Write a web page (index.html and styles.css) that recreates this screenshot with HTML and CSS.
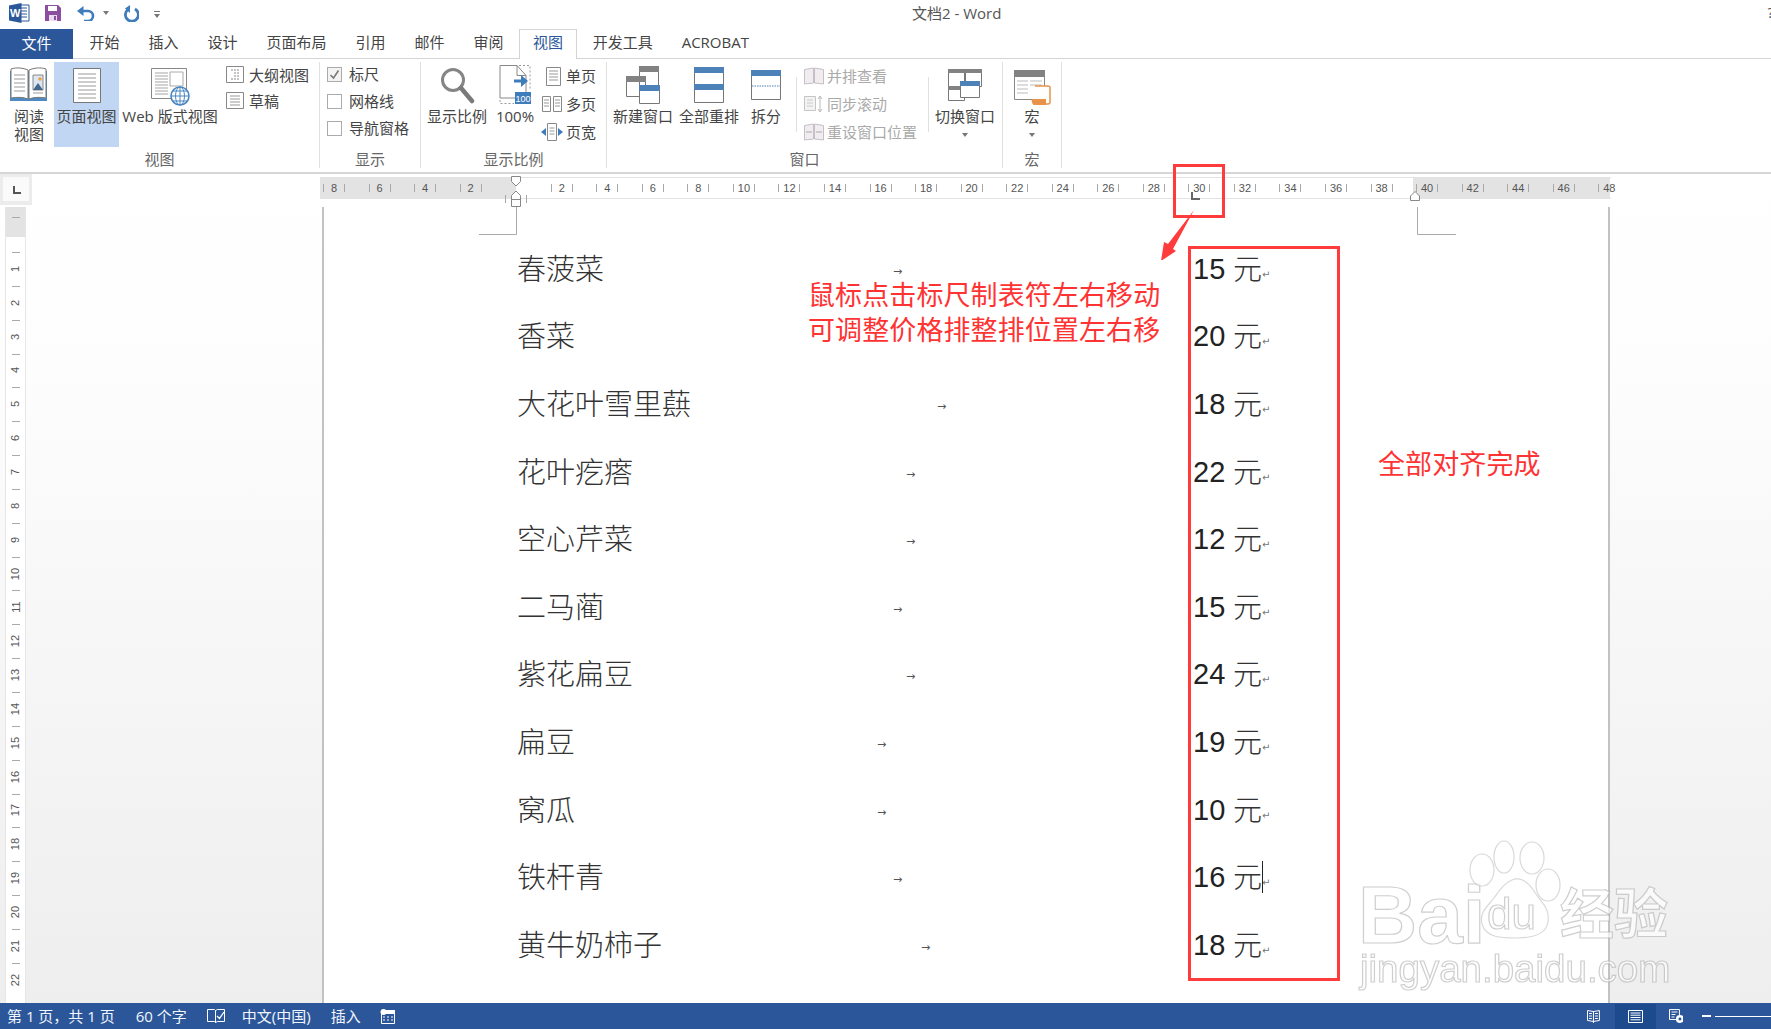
FILE: index.html
```html
<!DOCTYPE html>
<html lang="zh-CN">
<head>
<meta charset="utf-8">
<title>文档2 - Word</title>
<link rel="stylesheet" href="styles.css">
</head>
<body>
<header class="titlebar">
  <div class="qat">
    <svg class="q-word" width="21" height="20" viewBox="0 0 21 20"><path d="M11 2h9v16h-9z" fill="#fff" stroke="#2b579a"/><path d="M12 5h6M12 8h6M12 11h6M12 14h6" stroke="#2b579a"/><path d="M0 2.5 12.500 0v20L0 17.500z" fill="#2b579a"/><text x="6.200" y="14" text-anchor="middle" class="q-w">W</text></svg>
    <svg class="q-save" width="16" height="16" viewBox="0 0 16 16"><path d="M0 0h13l3 3v13H0z" fill="#8b4f9f"/><path d="M3 1h9v5H3z" fill="#fff"/><path d="M4 10h8v6H4z" fill="#e9dcef"/><path d="M9 11h2v4H9z" fill="#8b4f9f"/></svg>
    <svg class="q-undo" width="18" height="15" viewBox="0 0 18 15"><path d="M3 5h8a5 5 0 0 1 0 10H7" fill="none" stroke="#3f7cbc" stroke-width="2.600"/><path d="M6.500 0v10L0 5z" fill="#3f7cbc"/></svg>
    <i class="caret q-c1"></i>
    <svg class="q-redo" width="16" height="17" viewBox="0 0 16 17"><path d="M5 4.500A6.500 6.500 0 1 0 12 4" fill="none" stroke="#3f7cbc" stroke-width="2.800"/><path d="M9 0v8l5-4.500z" fill="#3f7cbc" transform="matrix(-1 0 0 1 16 0)"/></svg>
    <span class="q-more"><i class="q-bar"></i><i class="caret"></i></span>
  </div>
  <div class="doc-title">文档2 - Word</div>
  <div class="help">?</div>
</header>

<nav class="tabs">
  <a class="tab file">文件</a>
  <a class="tab">开始</a>
  <a class="tab">插入</a>
  <a class="tab">设计</a>
  <a class="tab">页面布局</a>
  <a class="tab">引用</a>
  <a class="tab">邮件</a>
  <a class="tab">审阅</a>
  <a class="tab active">视图</a>
  <a class="tab">开发工具</a>
  <a class="tab">ACROBAT</a>
</nav>

<section class="ribbon">
  <div class="group g1">
    <div class="g-body">
      <div class="big w46">
        <svg class="ic" width="46" height="46" viewBox="0 0 46 46"><path d="M4 9h37v30H4z" fill="#4d8ac4"/><path d="M5 7c6-2 12-1 17 1v29c-5-2-11-2-17-1z" fill="#fff" stroke="#777"/><path d="M23 8c5-2 11-3 17-1v29c-6-1-12-1-17 1z" fill="#fff" stroke="#777"/><path d="M8 13h11M8 17h11M8 21h11M8 25h11M8 29h11" stroke="#999"/><path d="M27 13h10v15H27z" fill="#dbe7f3" stroke="#888"/><path d="M27 28l5-7 5 7z" fill="#44688c"/><circle cx="34" cy="17" r="1.800" fill="#eda33d"/><path d="M27 31h10" stroke="#999"/></svg>
        <span>阅读</span><span>视图</span>
      </div>
      <div class="big w65 selected">
        <svg class="ic" width="30" height="46" viewBox="0 0 30 46"><path d="M1.500 6.500h27v34h-27z" fill="#fff" stroke="#777"/><path d="M6 12h18M6 16h18M6 20h18M6 24h18M6 28h18M6 32h18M6 36h18" stroke="#9a9a9a"/></svg>
        <span>页面视图</span>
      </div>
      <div class="big w98">
        <svg class="ic" width="40" height="46" viewBox="0 0 40 46"><path d="M1.500 6.500h35v30h-35z" fill="#fff" stroke="#888"/><path d="M5 11h13M5 14h13M5 17h13M5 20h13M5 23h13M5 26h13M5 29h13M5 32h13" stroke="#a5a5a5"/><path d="M20 10h13v14H20z" fill="none" stroke="#aaa"/><circle cx="30" cy="34" r="9" fill="#fff" stroke="#4b87c0" stroke-width="1.600"/><path d="M21 34h18M30 25v18M23 29h14M23 39h14" stroke="#4b87c0"/><ellipse cx="30" cy="34" rx="4.500" ry="9" fill="none" stroke="#4b87c0"/></svg>
        <span>Web 版式视图</span>
      </div>
      <div class="small-col c-view">
        <div class="srow"><svg width="18" height="18" viewBox="0 0 18 18"><path d="M.5.500h17v16H.5z" fill="#fff" stroke="#888"/><path d="M5 4h9M8 7h6M8 10h6M5 13h9" stroke="#888" stroke-dasharray="2 1"/></svg><span>大纲视图</span></div>
        <div class="srow"><svg width="18" height="18" viewBox="0 0 18 18"><path d="M.5.500h17v16H.5z" fill="#fff" stroke="#888"/><path d="M4 4h10M4 7h10M4 10h10M4 13h10" stroke="#999"/></svg><span>草稿</span></div>
      </div>
    </div>
    <div class="g-label">视图</div>
  </div>

  <div class="group g2">
    <div class="g-body checks">
      <div class="crow"><i class="cbox on"><svg width="13" height="13" viewBox="0 0 13 13"><path d="M2.500 7l3 3 5-7.500" fill="none" stroke="#777" stroke-width="1.500"/></svg></i><span>标尺</span></div>
      <div class="crow"><i class="cbox"></i><span>网格线</span></div>
      <div class="crow"><i class="cbox"></i><span>导航窗格</span></div>
    </div>
    <div class="g-label">显示</div>
  </div>

  <div class="group g3">
    <div class="g-body">
      <div class="big w60 ml6">
        <svg class="ic" width="36" height="46" viewBox="0 0 36 46"><circle cx="14" cy="18" r="10.500" fill="#fff" stroke="#858585" stroke-width="3"/><path d="M22 26l11 13" stroke="#7a7a7a" stroke-width="4.500" stroke-linecap="round"/></svg>
        <span>显示比例</span>
      </div>
      <div class="big w40 ml8">
        <svg class="ic" width="36" height="46" viewBox="0 0 36 46"><path d="M3 3.500h17l9 10V36H3z" fill="#fff" stroke="#888"/><path d="M20 3.500v10h9" fill="none" stroke="#888"/><path d="M22 3.500h11V28M3 38v3.500h14" fill="none" stroke="#999" stroke-dasharray="2 2"/><path d="M17 19h11" stroke="#3f7cbc" stroke-width="3"/><path d="M24 13l7 6-7 6z" fill="#3f7cbc"/><path d="M18 30h16v12H18z" fill="#3f7cbc"/><text x="26" y="40" text-anchor="middle" class="badge">100</text></svg>
        <span>100%</span>
      </div>
      <div class="small-col c-zoom">
        <div class="srow"><svg width="22" height="20" viewBox="0 0 22 20"><path d="M5.500 1.500h14v18h-14z" fill="#fff" stroke="#888"/><path d="M8 5h9M8 8h9M8 11h9M8 14h9" stroke="#999"/></svg><span>单页</span></div>
        <div class="srow"><svg width="22" height="20" viewBox="0 0 22 20"><path d="M1.500 2.500h8v15h-8zM12.500 2.500h8v15h-8z" fill="#fff" stroke="#888"/><path d="M3 6h5M3 9h5M3 12h5M14 6h5M14 9h5M14 12h5" stroke="#999"/></svg><span>多页</span></div>
        <div class="srow"><svg width="22" height="20" viewBox="0 0 22 20"><path d="M6.500 1.500h9v17h-9z" fill="#fff" stroke="#888"/><path d="M8.500 6h5M8.500 9h5M8.500 12h5" stroke="#999"/><path d="M0 10l5-4v8zM22 10l-5-4v8z" fill="#3f7cbc"/></svg><span>页宽</span></div>
      </div>
    </div>
    <div class="g-label">显示比例</div>
  </div>

  <div class="group g4">
    <div class="g-body">
      <div class="big w60 ml6">
        <svg class="ic" width="36" height="46" viewBox="0 0 36 46"><path d="M14.500 4.500h19v20h-19zM1.500 14.500h19v20h-19z" fill="#fff" stroke="#777"/><path d="M14 4h20v6H14zM1 14h20v6H1z" fill="#828282"/><path d="M14.500 23.500h20v18h-20z" fill="#fff" stroke="#777"/><path d="M14 23h21v6H14z" fill="#4d82b8"/></svg>
        <span>新建窗口</span>
      </div>
      <div class="big w60 ml6">
        <svg class="ic" width="32" height="46" viewBox="0 0 32 46"><path d="M1.500 5.500h29v35h-29z" fill="#fff" stroke="#777"/><path d="M1 5h30v6H1zM1 22h30v6H1z" fill="#4d82b8"/></svg>
        <span>全部重排</span>
      </div>
      <div class="big w40 ml7">
        <svg class="ic" width="32" height="46" viewBox="0 0 32 46"><path d="M1.500 8.500h29v29h-29z" fill="#fff" stroke="#777"/><path d="M1 8h30v6H1z" fill="#4d82b8"/><path d="M2 24h28" stroke="#4d82b8" stroke-dasharray="1.500 1"/></svg>
        <span>拆分</span>
      </div>
      <i class="vsep ms1"></i>
      <div class="small-col c-win">
        <div class="srow"><svg width="20" height="18" viewBox="0 0 20 18"><path d="M.5 2.500l9-1.500v15l-9 1zM19.500 2.500l-9-1.500v15l9 1z" fill="#f0ecf0" stroke="#c5c0c5"/></svg><span>并排查看</span></div>
        <div class="srow"><svg width="20" height="18" viewBox="0 0 20 18"><path d="M.5 1.500h11v14H.5z" fill="#f3f3f3" stroke="#c5c5c5"/><path d="M3 5h6M3 8h6M3 11h6" stroke="#ccc"/><path d="M16 1v16M14 4l2-3 2 3M14 14l2 3 2-3" fill="none" stroke="#bbb"/></svg><span>同步滚动</span></div>
        <div class="srow"><svg width="20" height="18" viewBox="0 0 20 18"><path d="M.5 2.500l9-1.500v15l-9 1zM19.500 2.500l-9-1.500v15l9 1z" fill="#f0ecf0" stroke="#c5c0c5"/><path d="M2 9h6M18 9h-6" stroke="#aaa"/></svg><span>重设窗口位置</span></div>
      </div>
      <i class="vsep ms2"></i>
      <div class="big w60 ml6">
        <svg class="ic" width="36" height="46" viewBox="0 0 36 46"><path d="M1.500 7.500h16v17h-16zM18.500 7.500h16v17h-16zM1.500 24.500h16v14h-16z" fill="#fff" stroke="#777"/><path d="M1 7h17v4H1zM18 7h17v4H18zM1 24h17v4H1z" fill="#828282"/><path d="M13.500 19.500h19v16h-19z" fill="#fff" stroke="#777"/><path d="M13 19h20v5H13z" fill="#4d82b8"/></svg>
        <span>切换窗口</span>
        <i class="caret down"></i>
      </div>
    </div>
    <div class="g-label">窗口</div>
  </div>

  <div class="group g5">
    <div class="g-body">
      <div class="big w58">
        <svg class="ic" width="38" height="46" viewBox="0 0 38 46"><path d="M1.500 8.500h30v29h-30z" fill="#fff" stroke="#888"/><path d="M1 8h31v7H1z" fill="#828282"/><path d="M4 19h11M17 19h12M4 23h11M17 23h12M4 27h11M4 31h11" stroke="#bbb"/><path d="M22 24h13c2 0 2 2 2 2v14c0 2-2 2-2 2H22" fill="#fff" stroke="#e8924a" stroke-width="1.500"/><path d="M19 37h14v6H21c-2 0-3-6-2-6z" fill="#e8924a"/></svg>
        <span>宏</span>
        <i class="caret down"></i>
      </div>
    </div>
    <div class="g-label">宏</div>
  </div>
</section>

<main class="workspace">
  <div class="ruler-row">
    <div class="tab-corner"><i class="l-mark"></i></div>
    <div class="h-ruler">
      <span class="rc"><b>8</b></span><span class="rc"><b>6</b></span><span class="rc"><b>4</b></span><span class="rc"><b>2</b></span><span class="rc"><b></b></span><span class="rc"><b>2</b></span><span class="rc"><b>4</b></span><span class="rc"><b>6</b></span><span class="rc"><b>8</b></span><span class="rc"><b>10</b></span><span class="rc"><b>12</b></span><span class="rc"><b>14</b></span><span class="rc"><b>16</b></span><span class="rc"><b>18</b></span><span class="rc"><b>20</b></span><span class="rc"><b>22</b></span><span class="rc"><b>24</b></span><span class="rc"><b>26</b></span><span class="rc"><b>28</b></span><span class="rc"><b>30</b></span><span class="rc"><b>32</b></span><span class="rc"><b>34</b></span><span class="rc"><b>36</b></span><span class="rc"><b>38</b></span><span class="rc"><b>40</b></span><span class="rc"><b>42</b></span><span class="rc"><b>44</b></span><span class="rc"><b>46</b></span><span class="rc"><b>48</b></span>
    </div>
  </div>
  <div class="doc-row">
    <div class="v-ruler">
      <div class="v-top"></div>
      <span class="vc"><b>1</b></span><span class="vc"><b>2</b></span><span class="vc"><b>3</b></span><span class="vc"><b>4</b></span><span class="vc"><b>5</b></span><span class="vc"><b>6</b></span><span class="vc"><b>7</b></span><span class="vc"><b>8</b></span><span class="vc"><b>9</b></span><span class="vc"><b>10</b></span><span class="vc"><b>11</b></span><span class="vc"><b>12</b></span><span class="vc"><b>13</b></span><span class="vc"><b>14</b></span><span class="vc"><b>15</b></span><span class="vc"><b>16</b></span><span class="vc"><b>17</b></span><span class="vc"><b>18</b></span><span class="vc"><b>19</b></span><span class="vc"><b>20</b></span><span class="vc"><b>21</b></span><span class="vc"><b>22</b></span>
    </div>
    <article class="page">
      <div class="line"><div class="item"><span class="name">春菠菜</span><i class="tabchar t3">→</i></div><div class="price"><span class="num">15</span> <span class="yuan">元</span><i class="pm">↵</i></div></div>
      <div class="line"><div class="item"><span class="name">香菜</span></div><div class="price"><span class="num">20</span> <span class="yuan">元</span><i class="pm">↵</i></div></div>
      <div class="line"><div class="item"><span class="name">大花叶雪里蕻</span><i class="tabchar t6">→</i></div><div class="price"><span class="num">18</span> <span class="yuan">元</span><i class="pm">↵</i></div></div>
      <div class="line"><div class="item"><span class="name">花叶疙瘩</span><i class="tabchar t4">→</i></div><div class="price"><span class="num">22</span> <span class="yuan">元</span><i class="pm">↵</i></div></div>
      <div class="line"><div class="item"><span class="name">空心芹菜</span><i class="tabchar t4">→</i></div><div class="price"><span class="num">12</span> <span class="yuan">元</span><i class="pm">↵</i></div></div>
      <div class="line"><div class="item"><span class="name">二马蔺</span><i class="tabchar t3">→</i></div><div class="price"><span class="num">15</span> <span class="yuan">元</span><i class="pm">↵</i></div></div>
      <div class="line"><div class="item"><span class="name">紫花扁豆</span><i class="tabchar t4">→</i></div><div class="price"><span class="num">24</span> <span class="yuan">元</span><i class="pm">↵</i></div></div>
      <div class="line"><div class="item"><span class="name">扁豆</span><i class="tabchar t2">→</i></div><div class="price"><span class="num">19</span> <span class="yuan">元</span><i class="pm">↵</i></div></div>
      <div class="line"><div class="item"><span class="name">窝瓜</span><i class="tabchar t2">→</i></div><div class="price"><span class="num">10</span> <span class="yuan">元</span><i class="pm">↵</i></div></div>
      <div class="line"><div class="item"><span class="name">铁杆青</span><i class="tabchar t3">→</i></div><div class="price"><span class="num">16</span> <span class="yuan">元</span><i class="cursor"></i><i class="pm">↵</i></div></div>
      <div class="line"><div class="item"><span class="name">黄牛奶柿子</span><i class="tabchar t5">→</i></div><div class="price"><span class="num">18</span> <span class="yuan">元</span><i class="pm">↵</i></div></div>
    </article>
  </div>
</main>

<footer class="status">
  <span class="st s1">第 1 页，共 1 页</span>
  <span class="st s2">60 个字</span>
  <svg class="s3" width="18" height="14" viewBox="0 0 18 14"><path d="M.5.500h7l1 1v12l-1-1h-7zM17.500.500h-7l-2 1v12l2-1h7z" fill="none" stroke="#fff"/><path d="M10 7l2.500 2.500L17 3" fill="none" stroke="#fff" stroke-width="1.300"/></svg>
  <span class="st s4">中文(中国)</span>
  <span class="st s5">插入</span>
  <svg class="s6" width="15" height="15" viewBox="0 0 15 15"><path d="M1.500 2.500h13v12h-13z" fill="none" stroke="#fff"/><path d="M1 1h14v4H1z" fill="#fff"/><circle cx="3.500" cy="3" r="3" fill="#fff"/><path d="M3 8h2M7 8h2M11 8h2M3 11h2M7 11h2M11 11h2" stroke="#fff"/></svg>
  <span class="st-right">
    <svg width="14" height="14" viewBox="0 0 14 14"><path d="M.5 1.500l6 1 6-1v10l-6 1-6-1z" fill="none" stroke="#fff"/><path d="M6.500 2v12M2 4.500h3M2 7h3M2 9.500h3M8 4.500h3M8 7h3M8 9.500h3" stroke="#fff"/></svg>
    <span class="view-on"><svg width="15" height="13" viewBox="0 0 15 13"><path d="M.5.500h14v12H.5z" fill="none" stroke="#fff"/><path d="M2.500 3h10M2.500 5.200h10M2.500 7.500h10M2.500 9.800h10" stroke="#fff"/></svg></span>
    <svg class="s-web" width="15" height="14" viewBox="0 0 15 14"><path d="M.5.500h10v10H.5z" fill="none" stroke="#fff"/><path d="M2.500 3h6M2.500 5.500h4M2.500 8h3" stroke="#fff"/><circle cx="11" cy="10" r="4" fill="#fff"/><circle cx="11" cy="10" r="1.500" fill="#2b579a"/></svg>
    <i class="z-minus"></i><i class="z-line"></i>
  </span>
</footer>

<!-- overlays -->
<svg class="markers" width="1771" height="260" viewBox="0 0 1771 260">
  <path d="M511.500 176.500h9v5l-4.500 4.500-4.500-4.500z" fill="#fff" stroke="#888"/>
  <path d="M516 191l4.500 4.500v11h-9v-11z" fill="#fff" stroke="#888"/>
  <path d="M511.500 199.500h9" stroke="#888"/>
  <path d="M1415 191.500l4.500 4.500v4.500h-9V196z" fill="#fff" stroke="#888"/>
  <path d="M516.500 207v27.500H479M1417.500 207v27.500H1456" fill="none" stroke="#aaa"/>
  <path d="M1192 192v7h8" fill="none" stroke="#666" stroke-width="2"/>
  <path d="M1174.500 165.500h49v51h-49z" fill="none" stroke="#ff3b3b" stroke-width="3"/>
  <path d="M1194 210 1173 249l3 2-15 10 3-19 4 2z" fill="#ff3b3b"/>
</svg>
<div class="big-box"></div>
<div class="note note-a">鼠标点击标尺制表符左右移动<br>可调整价格排整排位置左右移</div>
<div class="note note-b">全部对齐完成</div>

<div class="wm">
  <span class="wm-bai">Bai</span>
  <svg class="wm-paw" width="100" height="105" viewBox="0 0 100 105"><g fill="#fff" fill-opacity=".7" stroke="#aaa" stroke-opacity=".45" stroke-width="1.200"><ellipse cx="14" cy="30" rx="12" ry="16"/><ellipse cx="36" cy="17" rx="10" ry="16"/><ellipse cx="64" cy="18" rx="12" ry="16"/><ellipse cx="80" cy="45" rx="12" ry="16"/><path d="M44 40c10-4 18 4 24 14 5 8 14 14 12 28-2 14-18 16-32 16-14 0-30 0-34-14-3-12 6-18 12-26 5-7 10-15 18-18z"/></g></svg>
  <span class="wm-du">du</span>
  <span class="wm-cn">经验</span>
  <span class="wm-url">jingyan.baidu.com</span>
</div>
</body>
</html>
```
FILE: styles.css
```css
* { box-sizing: border-box; }
html, body { margin: 0; padding: 0; }
body {
  position: relative;
  width: 1771px;
  height: 1029px;
  overflow: hidden;
  display: flex;
  flex-direction: column;
  background: #fff;
  color: #444;
  font-family: "Open Sans", "Noto Sans CJK SC", sans-serif;
  font-size: 15px;
}
i { font-style: normal; }

/* title bar */
.titlebar { height: 29px; flex: none; display: flex; align-items: center; overflow: hidden; }
.qat { width: 912px; flex: none; display: flex; align-items: center; padding-left: 9px; }
.q-word { margin-top: -3px; }
.q-w { font: bold 11px "Liberation Sans", sans-serif; fill: #fff; }
.q-save { margin-left: 15px; margin-top: -3px; }
.q-undo { margin-left: 16px; margin-top: -3px; }
.q-c1 { margin-left: 8px; margin-top: -3px; }
.q-redo { margin-left: 14px; margin-top: -3px; }
.q-more { margin-left: 15px; display: flex; flex-direction: column; align-items: center; gap: 2px; }
.q-bar { width: 6px; height: 1px; background: #777; }
.caret { display: block; width: 0; height: 0; border: 3.500px solid transparent; border-top: 4px solid #777; border-bottom: 0; }
.doc-title { color: #555; font-size: 15px; line-height: 20px; margin-top: -4px; }
.help { margin-left: auto; margin-right: -3px; margin-top: -6px; color: #555; font-size: 15px; }

/* tabs */
.tabs { height: 30px; flex: none; display: flex; border-bottom: 1px solid #d4d4d4; }
.tab { padding: 0 14.500px; line-height: 27px; height: 29px; color: #444; white-space: nowrap; font-size: 15px; }
.tab.file { width: 73px; padding: 0; text-align: center; color: #fff; background: #2b579a; margin-right: 2px; height: 30px; line-height: 28px; }
.tab.active { height: 30px; padding: 0 13px; margin: 0 1px; border: 1px solid #d4d4d4; border-bottom: 0; background: #fff; color: #2b579a; line-height: 25px; }

/* ribbon */
.ribbon { height: 115px; flex: none; display: flex; padding-top: 3px; border-bottom: 2px solid #d6d6d6; align-items: flex-start; }
.group { height: 106px; flex: none; border-right: 1px solid #e0e0e0; display: flex; flex-direction: column; }
.g1 { width: 320px; }
.g2 { width: 101px; }
.g3 { width: 186px; }
.g4 { width: 396px; }
.g5 { width: 59px; }
.g-body { height: 87px; display: flex; align-items: flex-start; flex: none; }
.g-label { text-align: center; line-height: 20px; height: 18px; color: #666; font-size: 15px; }
.g1 .g-body { padding-left: 6px; }

.big { display: flex; flex-direction: column; align-items: center; height: 85px; flex: none; line-height: 18px; white-space: nowrap; font-size: 15px; }
.big .ic { display: block; flex: none; margin-bottom: -1px; }
.big .caret.down { margin-top: 8px; }
.w46 { width: 46px; }
.w65 { width: 65px; margin-left: 2px; }
.w98 { width: 98px; margin-left: 2px; }
.w60 { width: 60px; }
.w40 { width: 40px; }
.w58 { width: 58px; }
.ml6 { margin-left: 6px; }
.ml7 { margin-left: 7px; }
.ml8 { margin-left: 8px; }
.selected { background: #c1d6f2; }

.small-col { display: flex; flex-direction: column; flex: none; padding-top: 3px; }
.srow { display: flex; align-items: center; height: 20px; white-space: nowrap; line-height: 20px; font-size: 15px; }
.c-view { margin-left: 7px; gap: 6px; }
.c-view .srow svg { margin-right: 5px; }
.c-zoom { padding-top: 4px; gap: 8px; margin-left: 6px; }
.c-zoom .srow svg { margin-right: 3px; }
.c-win { margin-left: 7px; padding-top: 4px; gap: 8px; color: #aaa; }
.c-win .srow svg { margin-right: 3px; }
.vsep { display: block; width: 1px; height: 55px; margin-top: 15px; background: #e0e0e0; flex: none; }
.ms1 { margin-left: 10px; }
.ms2 { margin-left: 11px; }

.checks { flex-direction: column; padding: 2px 0 0 7px; gap: 7px; }
.crow { display: flex; align-items: center; height: 20px; line-height: 20px; white-space: nowrap; font-size: 15px; }
.cbox { width: 15px; height: 15px; border: 1px solid #ababab; margin-right: 7px; flex: none; background: #fff; display: flex; }
.cbox.on { background: #f3f3f3; }

.badge { font: 9px "Liberation Sans", sans-serif; fill: #fff; }

/* workspace */
.workspace { flex: 1; min-height: 0; display: flex; flex-direction: column; background: linear-gradient(#fff 0, #fdfdfd 200px, #eeeeee 100%); overflow: hidden; }
.ruler-row { height: 33px; flex: none; position: relative; padding: 3px 0 0 320px; }
.tab-corner { position: absolute; left: 0; top: 0; width: 32px; height: 31px; background: #ececec; padding: 3px; }
.tab-corner::before { content: ""; display: block; width: 26px; height: 24px; background: #fafafa; }
.l-mark { position: absolute; left: 13px; top: 12px; width: 8px; height: 8px; border-left: 2px solid #555; border-bottom: 2px solid #555; }
.h-ruler { width: 1295px; height: 22px; display: flex; background: linear-gradient(to right, #e3e3e3 196px, #fff 196px, #fff 1093px, #e3e3e3 1093px, #e3e3e3 1290px, #fff 1290px); border-top: 1px solid #e3e3e3; border-bottom: 1px solid #e3e3e3; border-image: linear-gradient(to right, #e3e3e3 1290px, #fff 1290px) 1; }
.rc { flex: none; width: 45.550px; height: 20px; display: flex; justify-content: center; align-items: center; }
.rc:first-child { margin-left: -8.800px; }
.rc b { position: relative; width: 22px; text-align: center; font: 400 11px/22px "Liberation Sans", sans-serif; color: #555; }
.rc b::before, .rc b::after { content: ""; position: absolute; top: 7px; width: 1px; height: 8px; background: #a8a8a8; }
.rc b::before { left: 0; }
.rc b::after { right: 0; }
.rc:last-child b::after { display: none; }

.doc-row { flex: 1; min-height: 0; display: flex; }
.v-ruler { width: 21px; margin-left: 5px; flex: none; background: #fff; border: 1px solid #e6e6e6; border-width: 0 1px; display: flex; flex-direction: column; overflow: hidden; }
.v-top { height: 45px; flex: none; background: linear-gradient(#e3e3e3 30px, #fff 30px); position: relative; }
.v-top::before { content: ""; position: absolute; left: 6px; top: 10px; width: 8px; height: 1px; background: #aaa; }
.vc { height: 33.850px; flex: none; position: relative; display: flex; align-items: center; justify-content: center; }
.vc::before { content: ""; position: absolute; left: 6px; top: 0; width: 8px; height: 1px; background: #aaa; }
.vc b { display: block; transform: rotate(-90deg); font: 400 11px/14px "Liberation Sans", sans-serif; color: #555; white-space: nowrap; }

.page { width: 1288px; margin-left: 296px; flex: none; background: #fff; border: 2px solid #c2c2c2; border-width: 0 2px; padding: 28px 0 0 193px; }
.line { height: 67.600px; display: grid; grid-template-columns: 676px auto; align-items: center; }
.item { display: flex; align-items: center; }
.name { font-size: 29px; line-height: 40px; color: #333; font-weight: 300; white-space: nowrap; }
.tabchar { font: 11px/12px "DejaVu Sans", sans-serif; color: #555; display: block; width: 10px; overflow: hidden; margin-top: 6px; }
.t2 { margin-left: 302px; }
.t3 { margin-left: 289px; }
.t4 { margin-left: 273px; }
.t5 { margin-left: 259px; }
.t6 { margin-left: 246px; }
.price { display: flex; align-items: center; position: relative; color: #222; }
.num { font: 29px/40px "Liberation Sans", sans-serif; width: 32px; }
.yuan { font-size: 29px; line-height: 40px; font-weight: 300; margin-left: 8px; color: #333; }
.pm { font: 10px/10px "DejaVu Sans", sans-serif; color: #777; margin-top: 12px; }
.cursor { position: absolute; left: 69px; top: 4px; width: 1px; height: 32px; background: #222; }

/* status */
.status { height: 26px; flex: none; background: #2b579a; color: #f2f5fa; display: flex; align-items: center; font-size: 15px; }
.st { white-space: nowrap; line-height: 20px; margin-top: -1px; }
.s1 { margin-left: 7px; }
.s2 { margin-left: 21px; }
.s3 { margin-left: 20px; }
.s4 { margin-left: 17px; }
.s5 { margin-left: 20px; }
.s6 { margin-left: 19px; }
.st-right { margin-left: auto; height: 100%; display: flex; align-items: center; width: 184px; }
.view-on { width: 41px; height: 25px; margin-top: 1px; margin-left: 14px; background: #1d4a8c; display: flex; align-items: center; justify-content: center; }
.s-web { margin-left: 13px; }
.z-minus { width: 9px; height: 2px; background: #fff; margin-left: 19px; }
.z-line { width: 56px; height: 1px; background: #fff; margin-left: 4px; }

/* annotations over the document */
.markers { position: absolute; left: 0; top: 0; pointer-events: none; }
.big-box { position: absolute; left: 1188px; top: 246px; width: 152px; height: 735px; border: 3px solid #ff3b3b; }
.note { position: absolute; color: #ff3333; font-size: 27px; line-height: 35px; white-space: nowrap; letter-spacing: .1px; }
.note-a { left: 808px; top: 277px; }
.note-b { left: 1378px; top: 446px; }

/* watermark */
.wm { position: absolute; left: 1350px; top: 840px; width: 340px; height: 155px; filter: blur(.6px); }
.wm span { position: absolute; line-height: 1; color: rgba(255,255,255,.65); -webkit-text-stroke: 1.200px rgba(160,160,160,.5); white-space: nowrap; }
.wm-bai { left: 8px; top: 34px; font: bold 82px "Liberation Sans", sans-serif; }
.wm-paw { position: absolute; left: 118px; top: 0; }
.wm-du { left: 137px; top: 52px; font: 44px "Liberation Sans", sans-serif; }
.wm-cn { left: 210px; top: 44px; font: bold 54px "Noto Sans CJK SC", sans-serif; }
.wm-url { left: 10px; top: 110px; font: 38.500px "Liberation Sans", sans-serif; }
```
